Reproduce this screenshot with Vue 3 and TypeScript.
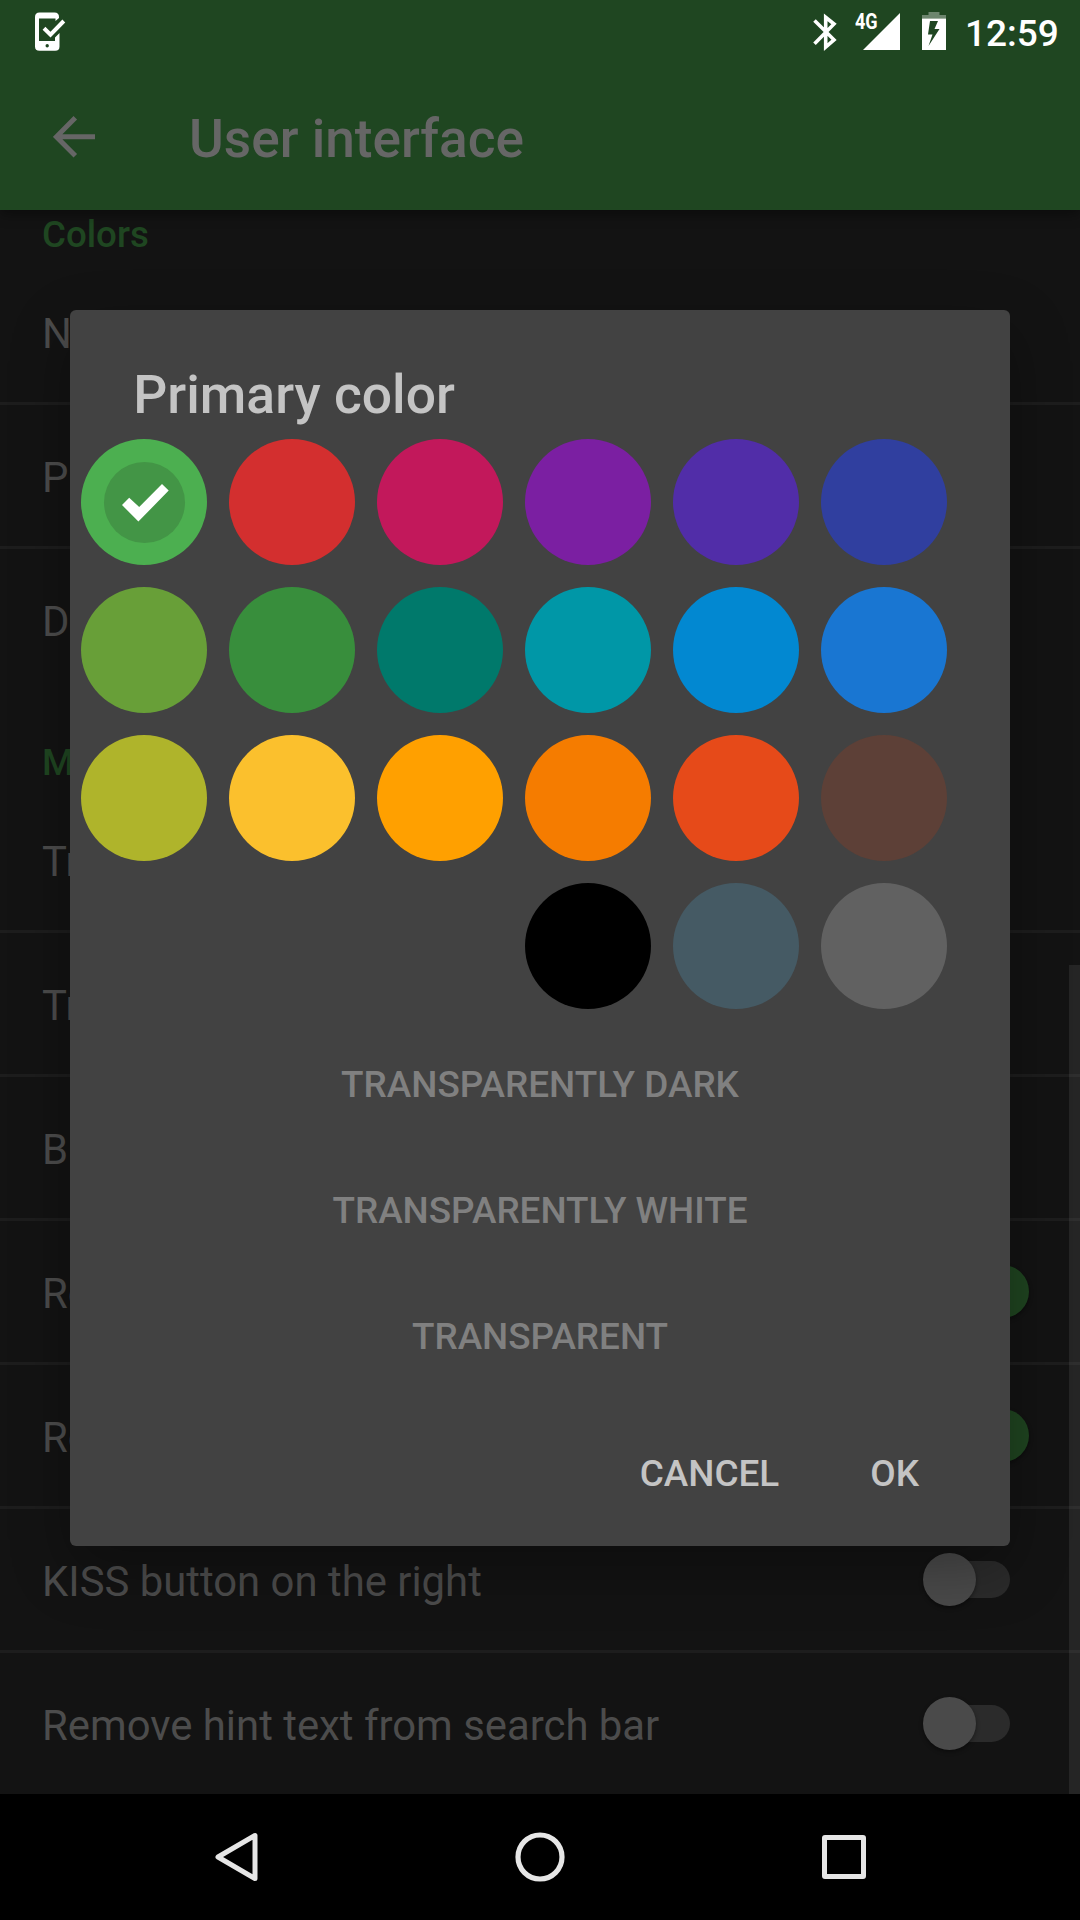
<script setup lang="ts">
interface Row {
  label: string
  toggle?: 'on' | 'off'
}
interface Section {
  title: string
  rows: Row[]
}

const sections: Section[] = [
  { title: 'Colors', rows: [{ label: 'N' }, { label: 'P' }, { label: 'D' }] },
  {
    title: 'M',
    rows: [
      { label: 'Tr' },
      { label: 'Tr' },
      { label: 'B' },
      { label: 'Re', toggle: 'on' },
      { label: 'Re', toggle: 'on' },
      { label: 'KISS button on the right', toggle: 'off' },
      { label: 'Remove hint text from search bar', toggle: 'off' },
    ],
  },
]

const palette: string[][] = [
  ['#4caf50', '#d32f2f', '#c2185b', '#7b1fa2', '#512da8', '#303f9f'],
  ['#689f38', '#388e3c', '#00796b', '#0097a7', '#0288d1', '#1976d2'],
  ['#afb42b', '#fbc02d', '#ffa000', '#f57c00', '#e64a19', '#5d4037'],
  ['#000000', '#455a64', '#616161'],
]
const selected = '#4caf50'
const extras: string[] = ['TRANSPARENTLY DARK', 'TRANSPARENTLY WHITE', 'TRANSPARENT']
</script>

<template>
  <div class="screen">
    <header class="top">
      <div class="status">
        <svg class="phone" width="32" height="40" viewBox="0 0 32 40">
          <path fill="#fff" fill-rule="evenodd" d="M4.500 .5H19.500Q24 .5 24 5V6L20.500 9V6.500H4V29H20V25.500L24.500 21V34.500Q24.500 38.800 20.200 38.800H4.500Q0 38.800 0 34.500V5Q0 .5 4.500 .5ZM12.200 32A1.700 1.700 0 1 0 12.200 35.400A1.700 1.700 0 1 0 12.200 32Z" />
          <path fill="none" stroke="#fff" stroke-width="4" d="M9 16.200L15.500 22.600L28.800 9" />
        </svg>
        <svg class="bt" width="24" height="38" viewBox="0 0 24 38">
          <path fill="none" stroke="#fff" stroke-width="3.600" d="M1.500 7.500L21 26.800L12.700 34V4.300L21 11L1.500 30.700" />
        </svg>
        <div class="cell">
          <span class="net">4G</span>
          <svg width="37" height="37" viewBox="0 0 37 37"><path fill="#fff" d="M0 37L37 0V37Z" /></svg>
        </div>
        <svg class="battery" width="24" height="38" viewBox="0 0 24 38">
          <path fill="#fff" fill-opacity=".35" d="M6.500 0H17.500V3H24V6.500H0V3H6.500Z" />
          <path fill="#fff" fill-rule="evenodd" d="M0 6.500H24V38H0ZM8 9L6 22.500H10.500L6.500 34L17.500 17H12.500L16 9Z" />
        </svg>
        <span class="clock">12:59</span>
      </div>
      <div class="bar">
        <svg class="back" width="42" height="42" viewBox="0 0 42 42">
          <path fill="none" stroke="#666" stroke-width="5" d="M42 20.800H5M22.300 1.800L3.400 20.800L22.300 39.800" />
        </svg>
        <h1>User interface</h1>
      </div>
    </header>

    <main class="viewport">
      <div class="list">
        <section v-for="s in sections" :key="s.title">
          <h2>{{ s.title }}</h2>
          <div v-for="(r, i) in s.rows" :key="i" class="row">
            <span class="label">{{ r.label }}</span>
            <span v-if="r.toggle" class="switch" :class="r.toggle"><i></i></span>
          </div>
        </section>
      </div>
      <div class="scroll"></div>
    </main>

    <nav class="nav">
      <svg width="50" height="56" viewBox="0 0 50 56">
        <path fill="none" stroke="#e6e6e6" stroke-width="5" stroke-linejoin="round" d="M43 6.500V49.500L6 28Z" />
      </svg>
      <svg width="56" height="56" viewBox="0 0 56 56">
        <circle cx="28" cy="28" r="22" fill="none" stroke="#e6e6e6" stroke-width="5.200" />
      </svg>
      <svg width="56" height="56" viewBox="0 0 56 56">
        <rect x="8.500" y="8.500" width="39" height="39" rx=".5" fill="none" stroke="#e6e6e6" stroke-width="5" stroke-linejoin="round" />
      </svg>
    </nav>

    <div class="dialog">
      <h3>Primary color</h3>
      <div class="palette">
        <div v-for="(line, i) in palette" :key="i" class="line">
          <div v-for="c in line" :key="c" class="swatch" :style="{ background: c }">
            <div v-if="c === selected" class="mark">
              <svg width="48" height="38" viewBox="0 0 48 38">
                <path fill="#fff" d="M0 21L7.200 13.800L17.200 23L40 0L46.700 6.500L16.400 37.600Z" />
              </svg>
            </div>
          </div>
        </div>
      </div>
      <button v-for="e in extras" :key="e" class="extra">{{ e }}</button>
      <div class="actions">
        <button>CANCEL</button>
        <button>OK</button>
      </div>
    </div>
  </div>
</template>

<style>
body {
  margin: 0;
  background: #000;
}
</style>

<style scoped>
.screen {
  position: relative;
  display: flex;
  flex-direction: column;
  width: 1080px;
  height: 1920px;
  overflow: hidden;
  background: #131313;
  font-family: Roboto, "Noto Sans", sans-serif;
}
h1, h2, h3 {
  margin: 0;
  font-weight: 500;
}
.top {
  position: relative;
  z-index: 1;
  height: 210px;
  background: #1f4621;
  box-shadow: 0 4px 12px rgba(0, 0, 0, 0.4);
}
.status {
  display: flex;
  align-items: flex-start;
  height: 72px;
}
.phone {
  margin: 12px 0 0 35px;
}
.bt {
  margin: 13px 0 0 auto;
}
.cell {
  position: relative;
  width: 46px;
  height: 37px;
  margin: 13px 0 0 17px;
  display: flex;
  justify-content: flex-end;
}
.net {
  position: absolute;
  left: 1px;
  top: -3px;
  color: #fff;
  font-size: 22px;
  line-height: 24px;
  font-weight: 700;
  transform: scaleX(0.82);
  transform-origin: left;
}
.battery {
  margin: 12px 0 0 22px;
}
.clock {
  width: 92px;
  margin: 13px 23px 0 19px;
  color: #fff;
  font-size: 37px;
  line-height: 42px;
  font-weight: 500;
  white-space: nowrap;
}
.bar {
  display: flex;
  align-items: center;
  height: 133px;
}
.back {
  margin: -4px 0 0 53px;
}
h1 {
  margin-left: 94px;
  color: #666;
  font-size: 53.200px;
  line-height: 60px;
}
.viewport {
  position: relative;
  height: 1584px;
  overflow: hidden;
}
.list {
  margin-top: -48px;
}
h2 {
  box-sizing: border-box;
  height: 99px;
  padding: 51px 42px 0;
  color: #1f4621;
  font-size: 36.700px;
  line-height: 44px;
}
.row {
  box-sizing: border-box;
  display: flex;
  align-items: center;
  justify-content: space-between;
  height: 141px;
  padding: 0 70px 0 42px;
  color: #4c4c4c;
  font-size: 41.850px;
}
.label {
  padding-top: 4px;
}
.row + .row {
  height: 144px;
  border-top: 3px solid #1d1d1d;
}
.switch {
  display: flex;
  align-items: center;
  width: 68px;
  height: 37px;
  border-radius: 19px;
  background: #2b2b2b;
}
.switch i {
  flex: none;
  width: 53px;
  height: 53px;
  margin-left: -19px;
  border-radius: 50%;
  background: #4a4a4a;
  box-shadow: 0 2px 4px rgba(0, 0, 0, 0.4);
}
.switch.on {
  background: #15290f;
}
.switch.on i {
  margin-left: 34px;
  background: #1f4420;
}
.scroll {
  position: absolute;
  right: 0;
  top: 755px;
  bottom: 0;
  width: 11px;
  background: rgba(255, 255, 255, 0.08);
}
.nav {
  flex: 1;
  display: flex;
  align-items: center;
  justify-content: space-between;
  padding: 0 208px 0 212px;
  background: #000;
}
.nav svg:nth-child(2) {
  margin-left: 2px;
}
.dialog {
  position: absolute;
  z-index: 2;
  left: 70px;
  top: 310px;
  box-sizing: border-box;
  width: 940px;
  height: 1236px;
  padding: 54px 0 0;
  border-radius: 6px;
  background: #424242;
  box-shadow: 0 22px 60px rgba(0, 0, 0, 0.3);
}
h3 {
  height: 75px;
  padding-left: 63.300px;
  color: #c4c4c4;
  font-size: 53.400px;
  line-height: 61px;
}
.palette {
  display: flex;
  flex-direction: column;
  gap: 22px;
  width: 866px;
  margin: 0 0 13px 11px;
}
.line {
  display: flex;
  justify-content: flex-end;
  gap: 22px;
}
.swatch {
  display: flex;
  align-items: center;
  justify-content: center;
  width: 126px;
  height: 126px;
  border-radius: 50%;
}
.mark {
  display: flex;
  align-items: center;
  justify-content: center;
  width: 81px;
  height: 81px;
  border-radius: 50%;
  background: #439546;
}
.mark svg {
  margin: 2px 0 0 4px;
}
button {
  display: block;
  padding: 0;
  border: 0;
  background: none;
  font: 500 36.900px/42px Roboto, "Noto Sans", sans-serif;
}
.extra {
  width: 100%;
  height: 126px;
  color: #808080;
}
.actions {
  display: flex;
  justify-content: flex-end;
  gap: 91px;
  margin-top: 53px;
  padding-right: 91px;
}
.actions button {
  color: #c4c4c4;
}
</style>
